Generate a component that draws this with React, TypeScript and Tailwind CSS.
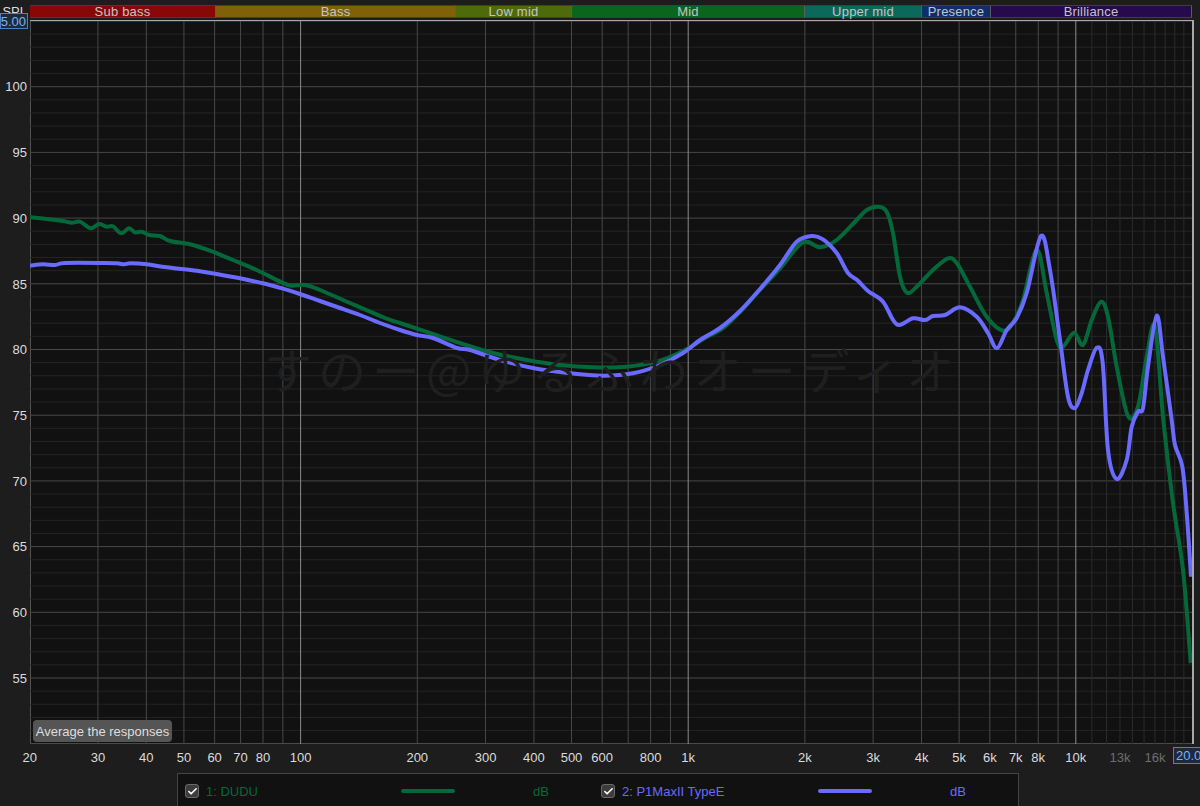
import { Check } from 'lucide-react';

const LEFT = 30;
const DECADE = 387.6;
const freqX = (f: number) => 300.6 + (Math.log10(f) - 2) * DECADE;
const dbY = (db: number) => 21 + (105 - db) * 13.14;

const bands = [
  { label: 'Sub bass', width: 186, bg: 'bg-[#8a0707]' },
  { label: 'Bass', width: 240, bg: 'bg-[#7e6109]' },
  { label: 'Low mid', width: 116, bg: 'bg-[#4e6b0c]' },
  { label: 'Mid', width: 233, bg: 'bg-[#0a661c]' },
  { label: 'Upper mid', width: 117, bg: 'bg-[#0b695c]' },
  { label: 'Presence', width: 69, bg: 'bg-[#0f2f6c]' },
  { label: 'Brilliance', width: 201, bg: 'bg-[#260a4c]' },
];

const yLabels = [100, 95, 90, 85, 80, 75, 70, 65, 60, 55];

const xLabels = [
  [20, '20'], [30, '30'], [40, '40'], [50, '50'], [60, '60'], [70, '70'], [80, '80'], [100, '100'],
  [200, '200'], [300, '300'], [400, '400'], [500, '500'], [600, '600'], [800, '800'], [1000, '1k'],
  [2000, '2k'], [3000, '3k'], [4000, '4k'], [5000, '5k'], [6000, '6k'], [7000, '7k'], [8000, '8k'],
  [10000, '10k'], [13000, '13k'], [16000, '16k'],
] as const;

// vertical grid: 1-9 per decade, every 1k above 10k
const majorX = [20, 30, 40, 50, 60, 70, 80, 90, 200, 300, 400, 500, 600, 700, 800, 900, 2000, 3000, 4000, 5000, 6000, 7000, 8000, 9000];
const decadeX = [100, 1000, 10000];
const fineX = [11000, 12000, 13000, 14000, 15000, 16000, 17000, 18000, 19000];
const dbLines = Array.from({ length: 56 }, (_, i) => 50 + i);

const green: [number, number][] = [
  [30, 217.3], [47, 219], [63, 221], [72, 222.7], [80, 221.7], [90.7, 228.3], [99, 224], [106.7, 226.7], [113, 226.3],
  [121, 233.3], [129, 228.3], [135, 232.3], [141.7, 231.7], [149, 235], [160, 236], [170, 241], [190, 244.3], [210, 250.7],
  [233, 260], [256.7, 270], [281.7, 282.3], [291.7, 285.7], [305, 285], [320, 290], [350, 303], [385, 318], [400, 323],
  [427, 332], [460, 343], [493, 353], [527, 360], [560, 365], [593, 367.3], [627, 366.7], [660, 360.7], [687, 349],
  [705, 338], [722, 329], [740, 312], [760, 290], [780, 268.3], [803, 242.3], [820, 247.3], [836.7, 240], [856.7, 220],
  [866.7, 210], [878, 206.7], [886.7, 211.7], [893, 233], [900, 276.7], [907, 292.7], [916.7, 286.7], [933, 270],
  [948, 258.3], [956.7, 263], [970, 286.7], [986.7, 316.7], [1003, 330.7], [1013, 323], [1023, 300], [1036.7, 250],
  [1046.7, 293], [1056.7, 340], [1063, 346.7], [1074, 332.7], [1083, 345], [1091.7, 320], [1101, 301.7], [1108, 316.7],
  [1116.7, 366.7], [1128, 416], [1138, 406.7], [1146.7, 356.7], [1155, 326.7], [1163.3, 420], [1173, 503], [1183, 570], [1190.7, 663],
];

const blue: [number, number][] = [
  [30, 265.7], [43, 264.3], [55, 265], [65, 263], [100, 263], [116.7, 263.3], [124, 264.3], [130.7, 263.3], [146.7, 264.3],
  [166.7, 267.3], [196.7, 270.7], [216.7, 274], [240, 278.3], [263, 283.3], [283, 288.7], [300, 294], [320, 301], [340, 308],
  [360, 315], [380, 323], [400, 330], [417, 335], [433, 338], [457, 348], [470, 350], [500, 360], [533, 368], [570, 373.3],
  [603, 375.7], [633, 373.3], [660, 365], [683, 353], [700, 340], [720, 328], [740, 311], [760, 289], [780, 265],
  [796.7, 241.7], [811.7, 236], [823, 239.3], [836.7, 253], [848, 273], [858, 280.7], [868, 291], [883, 301.7], [896.7, 324.3],
  [913, 318.3], [925, 320], [933, 316], [945, 315], [960, 307.3], [976.7, 316.7], [988, 333], [997, 348.3], [1006.7, 330],
  [1016.7, 318], [1026.7, 293], [1041, 236], [1050, 270], [1060, 340], [1068, 396.7], [1075, 408], [1081.7, 393], [1088, 370],
  [1096.7, 347.7], [1102.7, 363], [1108, 450], [1116.7, 479], [1126.7, 460], [1131.7, 426.7], [1138, 411.7], [1143, 408],
  [1148, 366.7], [1156.7, 315.7], [1163, 356.7], [1171.7, 420], [1175, 445], [1182.3, 466.7], [1186.7, 513], [1191, 576.7],
];

// catmull-rom through the traced points
function smooth(pts: [number, number][]) {
  let d = `M${pts[0][0]} ${pts[0][1]}`;
  for (let i = 0; i < pts.length - 1; i++) {
    const p0 = pts[Math.max(i - 1, 0)];
    const p1 = pts[i];
    const p2 = pts[i + 1];
    const p3 = pts[Math.min(i + 2, pts.length - 1)];
    const c1x = p1[0] + (p2[0] - p0[0]) / 6;
    const c1y = p1[1] + (p2[1] - p0[1]) / 6;
    const c2x = p2[0] - (p3[0] - p1[0]) / 6;
    const c2y = p2[1] - (p3[1] - p1[1]) / 6;
    d += ` C${c1x.toFixed(1)} ${c1y.toFixed(1)} ${c2x.toFixed(1)} ${c2y.toFixed(1)} ${p2[0]} ${p2[1]}`;
  }
  return d;
}

function PlotGrid() {
  return (
    <svg className="block w-full h-full" viewBox="30 21 1162 723">
      {dbLines.map(db => (
        <line key={db} x1={LEFT} x2={1192} y1={dbY(db)} y2={dbY(db)} stroke={db % 5 === 0 ? '#484848' : '#242424'} strokeWidth="1" />
      ))}
      {fineX.map(f => (
        <line key={f} x1={freqX(f)} x2={freqX(f)} y1={21} y2={744} stroke="#2b2b2b" strokeWidth="1" />
      ))}
      {majorX.map(f => (
        <line key={f} x1={freqX(f)} x2={freqX(f)} y1={21} y2={744} stroke="#484848" strokeWidth="1" />
      ))}
      {decadeX.map(f => (
        <line key={f} x1={freqX(f)} x2={freqX(f)} y1={21} y2={744} stroke="#8c8c8c" strokeWidth="1" />
      ))}
      <path d={smooth(green)} fill="none" stroke="#05683a" strokeWidth="4" strokeLinejoin="round" />
      <path d={smooth(blue)} fill="none" stroke="#6a6aff" strokeWidth="4" strokeLinejoin="round" />
    </svg>
  );
}

function LegendEntry({ name, color, bar, lineGap, width }: { name: string; color: string; bar: string; lineGap: string; width: string }) {
  return (
    <div className={clsx('flex items-center text-[13px]', width)}>
      <span className="w-[14px] h-[14px] mr-[7px] rounded-[3px] bg-[#3c3c3c] border border-[#6a6a6a] flex items-center justify-center text-white">
        <Check size={11} strokeWidth={3.5} />
      </span>
      <span className={clsx('whitespace-nowrap', color, lineGap)}>{name}</span>
      <span className={clsx('w-[54px] h-[4px] rounded-full mr-[78px]', bar)}></span>
      <span className={color}>dB</span>
    </div>
  );
}

export default function App() {
  return (
    <div className="w-[1200px] h-[806px] overflow-hidden bg-[#1d1d1d] text-[#dcdcdc] text-[13px] leading-none" style={{ fontFamily: '"Liberation Sans", Arial, sans-serif' }}>
      <header className="h-[21px] flex relative">
        <div className="w-[30px] pt-[5px] pr-[3px] text-right">SPL</div>
        <div className="flex h-[13px] mt-[5px]">
          {bands.map(b => (
            <div
              key={b.label}
              className={clsx('flex items-center justify-center border-y border-r border-y-[#3f3f3f] border-r-[#5c5c5c] text-[13px] tracking-[0.2px] text-[#c4c4c4]', b.bg)}
              style={{ width: b.width }}
            >
              {b.label}
            </div>
          ))}
        </div>
        <div className="absolute left-0 top-[13px] w-[28px] h-[16px] z-10 overflow-hidden bg-[#1e2a3c] border border-[#4f7fc4] text-[#7db0f5] flex items-center justify-end pr-[1px]">
          <span className="whitespace-nowrap">105.00</span>
        </div>
      </header>

      <main className="flex h-[723px]">
        <div className="w-[30px] pt-[33.15px] pr-[3px]">
          {yLabels.map(v => (
            <div key={v} className="h-[65.7px] flex items-center justify-end">{v}</div>
          ))}
        </div>
        <div className="w-[1162px] relative border-t border-[#a8a8a8] border-r-2 border-r-[#a8a8a8] box-content -mt-px bg-[#111111] shadow-[inset_1px_0_0_#555,inset_0_-1px_0_#555]">
          <PlotGrid />
          <div className="absolute left-[234px] top-[323px] text-[#1f1f1f] text-[48px] tracking-[6px] whitespace-nowrap leading-none" style={{ fontFamily: '"Noto Sans CJK JP", sans-serif' }}>
            すのー@ゆるふわオーディオ
          </div>
          <button className="absolute left-[3px] top-[699px] w-[139px] h-[22px] rounded-[4px] bg-[#555555] text-[#dedede] text-[13px] flex items-center justify-center">
            Average the responses
          </button>
        </div>
      </main>

      <div className="relative h-[29px]">
        {xLabels.map(([f, label]) => (
          <span
            key={f}
            className={clsx('absolute top-[7px] -translate-x-1/2', f > 10000 && 'text-[#6e6e6e]')}
            style={{ left: freqX(f) }}
          >
            {label}
          </span>
        ))}
        <div className="absolute left-[1173px] top-[3px] w-[30px] h-[17px] bg-[#1e2a3c] border border-[#4f7fc4] text-[#7db0f5] flex items-center pl-[2px]">
          20.00
        </div>
      </div>

      <div className="ml-[177px] w-[842px] h-[40px] bg-[#111111] border border-[#444] pl-[7px] pt-[10px] flex items-start">
        <LegendEntry name="1: DUDU" color="text-[#05683a]" bar="bg-[#05683a]" lineGap="w-[195px]" width="w-[416px]" />
        <LegendEntry name="2: P1MaxII TypeE" color="text-[#6a6aff]" bar="bg-[#6a6aff]" lineGap="w-[196px]" width="w-[380px]" />
      </div>
    </div>
  );
}

function clsx(...classes: any[]) {
  return classes.filter(Boolean).join(' ');
}
